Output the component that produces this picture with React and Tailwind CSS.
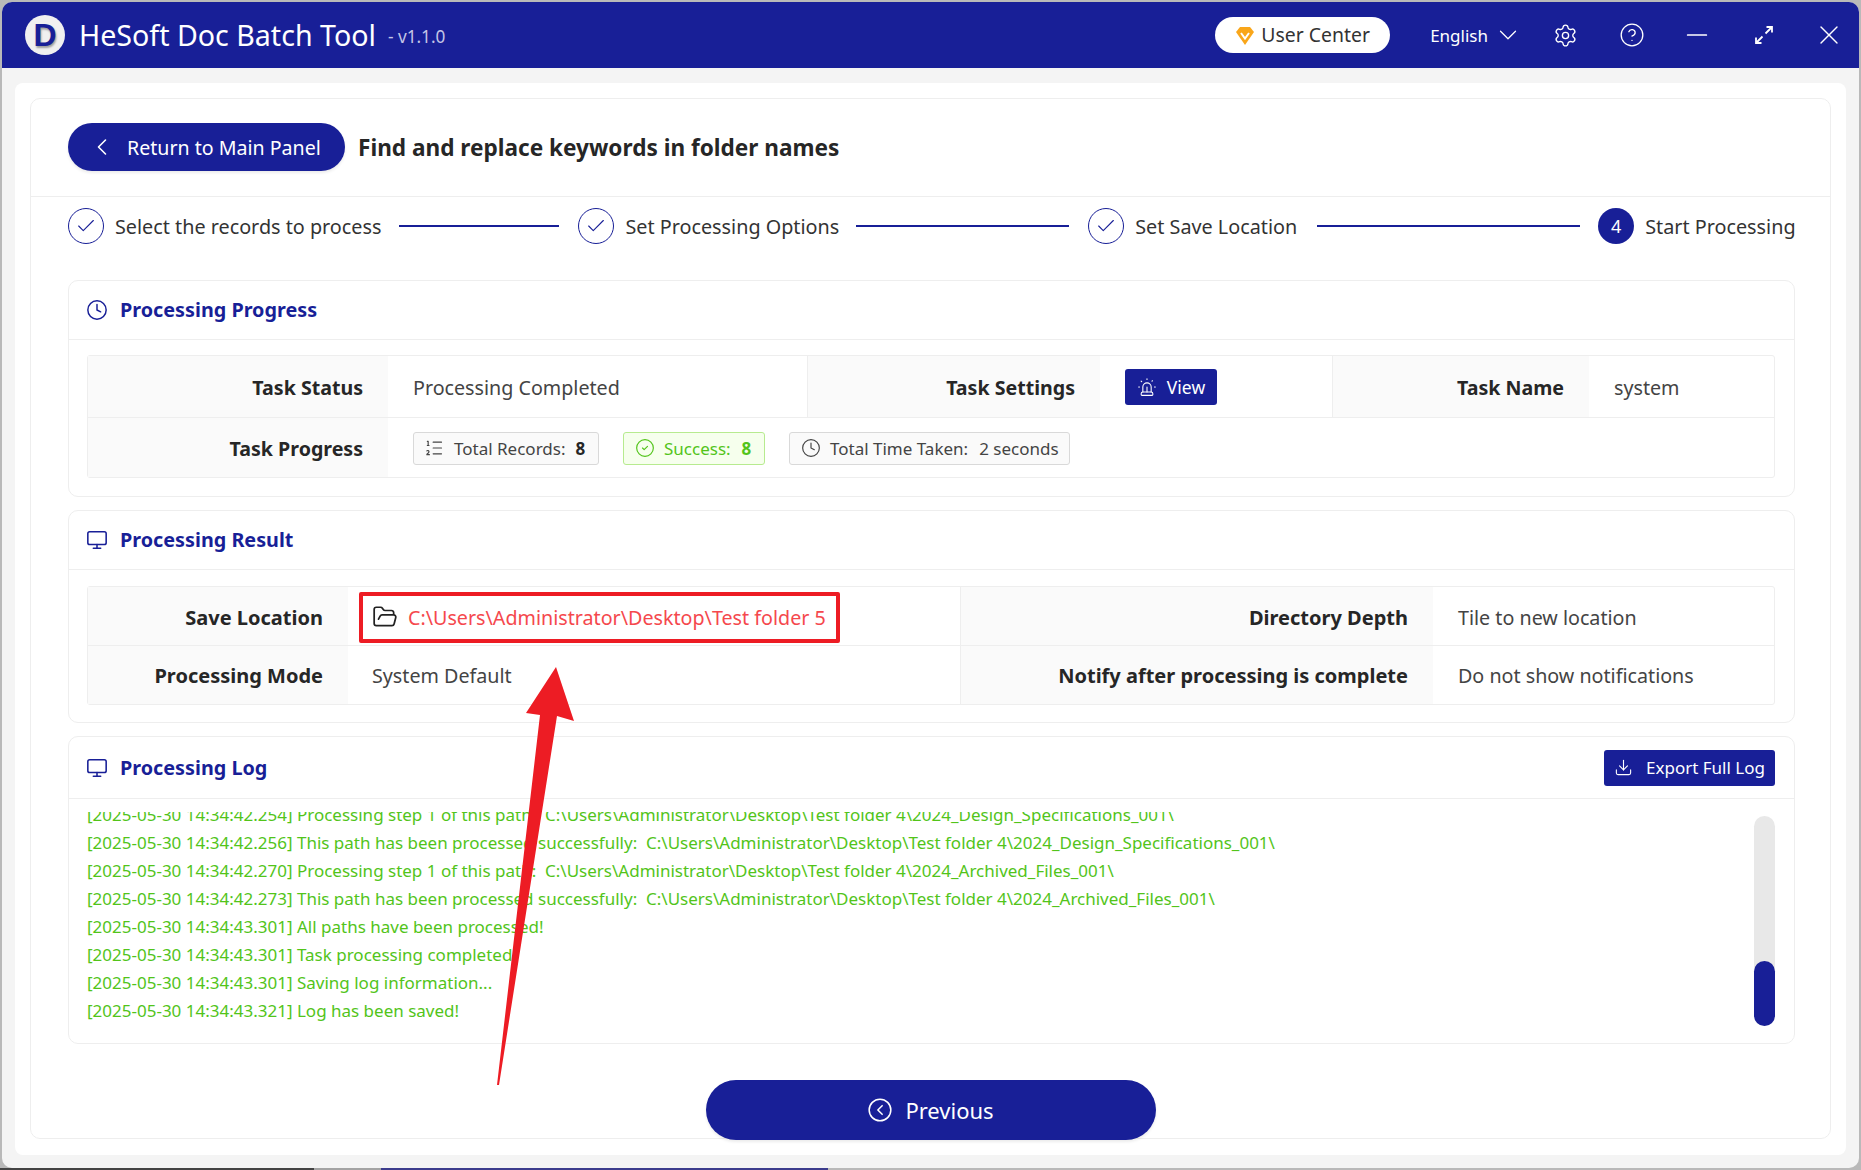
import React from 'react';
import {
  ChevronLeft,
  ChevronDown,
  Check,
  Clock,
  Monitor,
  Settings,
  CircleHelp,
  Minus,
  X,
  ListOrdered,
  CircleCheck,
  Siren,
  FolderOpen,
  Download,
  CircleChevronLeft,
} from 'lucide-react';

const logLines = [
  '[2025-05-30 14:34:42.254] Processing step 1 of this path:  C:\\Users\\Administrator\\Desktop\\Test folder 4\\2024_Design_Specifications_001\\',
  '[2025-05-30 14:34:42.256] This path has been processed successfully:  C:\\Users\\Administrator\\Desktop\\Test folder 4\\2024_Design_Specifications_001\\',
  '[2025-05-30 14:34:42.270] Processing step 1 of this path:  C:\\Users\\Administrator\\Desktop\\Test folder 4\\2024_Archived_Files_001\\',
  '[2025-05-30 14:34:42.273] This path has been processed successfully:  C:\\Users\\Administrator\\Desktop\\Test folder 4\\2024_Archived_Files_001\\',
  '[2025-05-30 14:34:43.301] All paths have been processed!',
  '[2025-05-30 14:34:43.301] Task processing completed',
  '[2025-05-30 14:34:43.301] Saving log information...',
  '[2025-05-30 14:34:43.321] Log has been saved!',
];

function Step({ label, num, lineClass }) {
  return (
    <>
      {num ? (
        <div className="w-[36px] h-[36px] rounded-full bg-[#181f97] text-white text-[18px] flex items-center justify-center shrink-0">
          {num}
        </div>
      ) : (
        <div className="w-[36px] h-[36px] rounded-full border border-[#181f97] text-[#181f97] flex items-center justify-center shrink-0">
          <Check size={22} strokeWidth={1.2} />
        </div>
      )}
      <span className="ml-[11px] pt-[2px] text-[19.8px] text-[#333] whitespace-nowrap">{label}</span>
      {lineClass && <div className={`h-[2px] bg-[#181f97] ${lineClass}`} />}
    </>
  );
}

function PanelHeader({ icon, title, h, children }) {
  return (
    <div className={`flex items-center justify-between pl-[17px] pr-[19px] border-b border-[#eeeeee] ${h}`}>
      <div className="flex items-center gap-[12px] text-[#181f97]">
        {icon}
        <span className="text-[19.8px] font-bold">{title}</span>
      </div>
      {children}
    </div>
  );
}

function Label({ className, children }) {
  return (
    <div className={`bg-[#fafafa] flex items-center justify-end pr-[25px] pt-[2px] font-bold text-[#262626] whitespace-nowrap ${className}`}>
      {children}
    </div>
  );
}

function Value({ className, children }) {
  return (
    <div className={`flex items-center pt-[2px] text-[19.7px] text-[#444] whitespace-nowrap ${className}`}>
      {children}
    </div>
  );
}

function Tag({ className, children }) {
  return (
    <div className={`h-[33px] flex items-center rounded-[3px] border text-[17px] whitespace-nowrap ${className}`}>
      {children}
    </div>
  );
}

export default function App() {
  return (
    <div className="relative w-[1861px] h-[1170px] overflow-hidden bg-[#b9b9b9] p-[2px] font-['Noto_Sans','Open_Sans',sans-serif]">
      <div className="absolute left-0 right-0 bottom-0 h-[2px] flex">
        <div className="w-[314px] bg-[#444444]" />
        <div className="w-[67px] bg-[#a3a3a3]" />
        <div className="w-[447px] bg-[#3c3c8c]" />
      </div>

      <div className="relative h-full flex flex-col rounded-[10px] overflow-hidden bg-[#f4f4f4]">
        <div className="h-[66px] shrink-0 bg-[#181f97] flex items-center text-white">
          <div className="ml-[23px] w-[40px] h-[40px] rounded-full bg-[#f0f0f0] flex items-center justify-center shrink-0">
            <span className="text-[32px] font-bold leading-none text-[#181f97] font-['Liberation_Sans'] [text-shadow:1px_2px_2px_rgba(0,0,0,0.35)]">D</span>
          </div>
          <span className="ml-[14px] text-[28.6px] whitespace-nowrap">HeSoft Doc Batch Tool</span>
          <span className="ml-[12px] mt-[3px] text-[17.2px] text-[#c3c5e6] whitespace-nowrap">- v1.1.0</span>
          <div className="ml-auto flex items-center">
            <div className="w-[175px] h-[36px] rounded-full bg-white flex items-center justify-center gap-[6px] text-[19.4px] text-[#333]">
              <svg width="20" height="21" viewBox="0 0 20 21">
                <path d="M5 2h10l4 5-9 13L1 7z" fill="#f9a61a" />
                <path d="M6 8l4 5.5L14 8" fill="none" stroke="#fff" strokeWidth="2" />
              </svg>
              <span>User Center</span>
            </div>
            <span className="ml-[40px] mt-[1px] text-[17px]">English</span>
            <ChevronDown className="ml-[5px]" size={30} strokeWidth={1} />
            <Settings className="ml-[30px]" size={25} strokeWidth={1.3} />
            <CircleHelp className="ml-[41px]" size={26} strokeWidth={1.2} />
            <Minus className="ml-[36px]" size={32} strokeWidth={1.3} />
            <svg className="ml-[42px]" width="18" height="18" viewBox="0 0 18 18" fill="none" stroke="currentColor" strokeWidth="1.8">
              <path d="M10.5 7.5L17 1M11.5 1H17V6.5" />
              <path d="M7.5 10.5L1 17M6.5 17H1V11.5" />
            </svg>
            <X className="ml-[40px] mr-[14px]" size={32} strokeWidth={1} />
          </div>
        </div>

        <div className="flex-1 px-[13px] pt-[15px] pb-[13px]">
          <div className="h-full bg-white rounded-[8px] p-[15px] pb-[16px]">
            <div className="h-[1041px] rounded-[10px] border border-[#eeeeee] flex flex-col">
              <div className="h-[98px] shrink-0 border-b border-[#eeeeee] flex items-center pl-[37px]">
                <button className="w-[277px] h-[48px] mb-[2px] rounded-full bg-[#181f97] text-white text-[19.6px] flex items-center shadow-[0_2px_3px_rgba(0,0,0,0.08)]">
                  <ChevronLeft className="ml-[20px]" size={28} strokeWidth={1.4} />
                  <span className="ml-[11px] pt-[2px] whitespace-nowrap">Return to Main Panel</span>
                </button>
                <h1 className="ml-[13px] text-[22.6px] font-bold text-[#262626] whitespace-nowrap">Find and replace keywords in folder names</h1>
              </div>

              <div className="h-[58px] shrink-0 flex items-center pl-[37px]">
                <Step label="Select the records to process" lineClass="ml-[18px] w-[160px] mr-[19px]" />
                <Step label="Set Processing Options" lineClass="ml-[17px] w-[213px] mr-[19px]" />
                <Step label="Set Save Location" lineClass="ml-[20px] w-[263px] mr-[18px]" />
                <Step label="Start Processing" num="4" />
              </div>

              <div className="mt-[25px] ml-[37px] w-[1727px] flex flex-col gap-[13px]">
                <section className="h-[217px] rounded-[10px] border border-[#eeeeee]">
                  <PanelHeader
                    h="h-[59px]"
                    title="Processing Progress"
                    icon={<Clock size={22} strokeWidth={1.6} />}
                  />
                  <div className="ml-[18px] mr-[19px] mt-[15px] border border-[#eeeeee] rounded-[3px] text-[19.6px]">
                    <div className="h-[62px] flex border-b border-[#eeeeee]">
                      <Label className="w-[300px]">Task Status</Label>
                      <Value className="w-[419px] pl-[25px]">Processing Completed</Value>
                      <Label className="w-[293px] border-l border-[#eeeeee]">Task Settings</Label>
                      <Value className="w-[232px] pl-[25px]">
                        <button className="w-[92px] h-[36px] -mt-[2px] rounded-[3px] bg-[#181f97] text-white text-[17.5px] flex items-center justify-center gap-[10px]">
                          <Siren size={20} strokeWidth={1.3} />
                          <span className="pt-[1px]">View</span>
                        </button>
                      </Value>
                      <Label className="w-[257px] border-l border-[#eeeeee]">Task Name</Label>
                      <Value className="flex-1 pl-[25px]">system</Value>
                    </div>
                    <div className="h-[59px] flex">
                      <Label className="w-[300px]">Task Progress</Label>
                      <div className="flex-1 flex items-center gap-[24px] pl-[25px] pt-[1px]">
                        <Tag className="w-[186px] bg-[#fafafa] border-[#d9d9d9] text-[#444] pl-[10px]">
                          <ListOrdered size={20} strokeWidth={1.4} />
                          <span className="ml-[10px] pt-[2px]">Total Records:</span>
                          <b className="ml-[10px] pt-[2px] text-[#262626]">8</b>
                        </Tag>
                        <Tag className="w-[142px] bg-[#f6ffed] border-[#b7eb8f] text-[#52c41a] pl-[11px]">
                          <CircleCheck size={20} strokeWidth={1.4} />
                          <span className="ml-[9px] pt-[2px]">Success:</span>
                          <b className="ml-[11px] pt-[2px]">8</b>
                        </Tag>
                        <Tag className="w-[281px] bg-[#fafafa] border-[#d9d9d9] text-[#444] pl-[11px]">
                          <Clock size={20} strokeWidth={1.4} />
                          <span className="ml-[9px] pt-[2px]">Total Time Taken:</span>
                          <span className="ml-[11px] pt-[2px]">2 seconds</span>
                        </Tag>
                      </div>
                    </div>
                  </div>
                </section>

                <section className="h-[213px] rounded-[10px] border border-[#eeeeee]">
                  <PanelHeader
                    h="h-[59px]"
                    title="Processing Result"
                    icon={<Monitor size={22} strokeWidth={1.7} />}
                  />
                  <div className="ml-[18px] mr-[19px] mt-[16px] border border-[#eeeeee] rounded-[3px] text-[20px]">
                    <div className="h-[59px] flex border-b border-[#eeeeee]">
                      <Label className="w-[260px]"><span className="pt-[2px]">Save Location</span></Label>
                      <Value className="relative w-[612px] pl-[24px] text-[#f5484d]">
                        <FolderOpen className="text-[#222]" size={26} strokeWidth={1.6} />
                        <span className="ml-[10px] pt-[2px]">C:\Users\Administrator\Desktop\Test folder 5</span>
                        <div className="absolute left-[11px] top-[5px] w-[481px] h-[51px] border-[4px] border-[#ed1c24] rounded-[2px]" />
                      </Value>
                      <Label className="w-[473px] border-l border-[#eeeeee]"><span className="pt-[2px]">Directory Depth</span></Label>
                      <Value className="flex-1 pl-[25px]"><span className="pt-[2px]">Tile to new location</span></Value>
                    </div>
                    <div className="h-[58px] flex">
                      <Label className="w-[260px]">Processing Mode</Label>
                      <Value className="w-[612px] pl-[24px]">System Default</Value>
                      <Label className="w-[473px] border-l border-[#eeeeee]">Notify after processing is complete</Label>
                      <Value className="flex-1 pl-[25px]">Do not show notifications</Value>
                    </div>
                  </div>
                </section>

                <section className="h-[308px] rounded-[10px] border border-[#eeeeee]">
                  <PanelHeader
                    h="h-[62px]"
                    title="Processing Log"
                    icon={<Monitor size={22} strokeWidth={1.7} />}
                  >
                    <button className="w-[171px] h-[36px] rounded-[3px] bg-[#181f97] text-white text-[17px] flex items-center justify-center gap-[13px]">
                      <Download size={19} strokeWidth={1.4} />
                      Export Full Log
                    </button>
                  </PanelHeader>
                  <div className="flex pl-[18px] pr-[19px] pt-[13px]">
                    <div className="flex-1 h-[218px] overflow-hidden text-[17px] leading-[28px] text-[#52c41a] whitespace-pre">
                      <div className="-mt-[11px]">
                        {logLines.map((line) => (
                          <div key={line}>{line}</div>
                        ))}
                      </div>
                    </div>
                    <div className="w-[21px] h-[210px] mt-[4px] rounded-full bg-[#e8e8e8] flex flex-col justify-end">
                      <div className="h-[65px] rounded-full bg-[#181f97]" />
                    </div>
                  </div>
                </section>
              </div>

              <div className="mt-[36px] flex justify-center">
                <button className="w-[450px] h-[60px] rounded-full bg-[#181f97] text-white text-[22px] flex items-center justify-center gap-[12px] shadow-[0_2px_3px_rgba(0,0,0,0.08)]">
                  <CircleChevronLeft size={26} strokeWidth={1.4} />
                  Previous
                </button>
              </div>
            </div>
          </div>
        </div>
      </div>

      <svg className="absolute left-0 top-0 pointer-events-none" width="1861" height="1170" viewBox="0 0 1861 1170">
        <path d="M556 667 L574 721 L557 716 L499 1085 L497 1085 L540 715 L526 713 Z" fill="#ed1c24" />
      </svg>
    </div>
  );
}
